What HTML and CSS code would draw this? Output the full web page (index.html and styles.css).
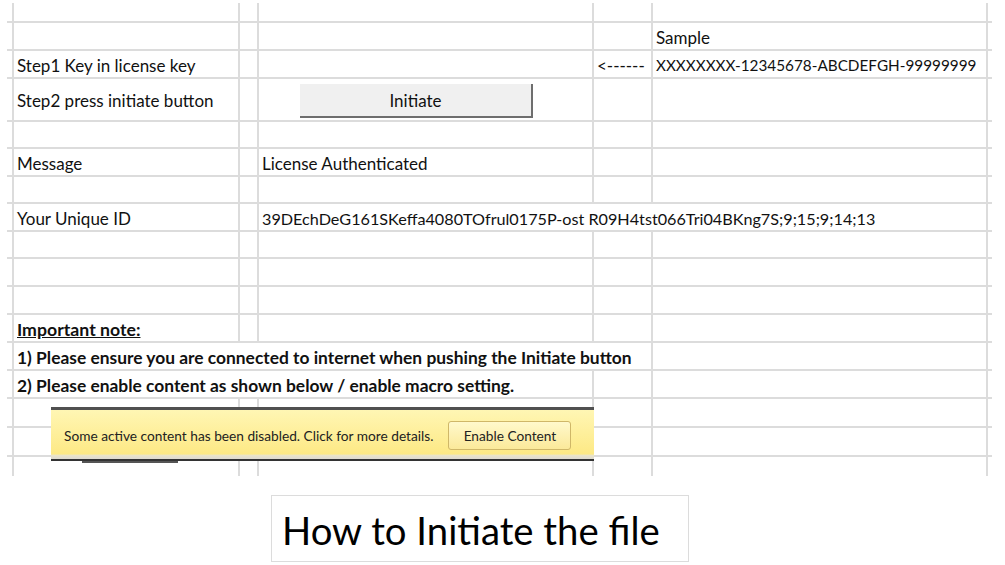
FILE: index.html
```html
<!DOCTYPE html>
<html lang="en">
<head>
    <meta charset="UTF-8">
    <meta name="viewport" content="width=device-width, initial-scale=1.0">
    <title>How to Initiate the file</title>
    <link rel="stylesheet" href="styles.css">
</head>
<body>
    <div class="sheet">
        <div class="row h20"><div class="c"></div><div class="c"></div><div class="c"></div><div class="c"></div><div class="c"></div><div class="c"></div><div class="c end"></div></div>
        <div class="row"><div class="c"></div><div class="c"></div><div class="c"></div><div class="c"></div><div class="c"></div><div class="c">Sample</div><div class="c end"></div></div>
        <div class="row"><div class="c"></div><div class="c">Step1 Key in license key</div><div class="c"></div><div class="c"></div><div class="c">&lt;------</div><div class="c key">XXXXXXXX-12345678-ABCDEFGH-99999999</div><div class="c end"></div></div>
        <div class="row h43">
            <div class="c"></div><div class="c">Step2 press initiate button</div><div class="c"></div>
            <div class="c"><button class="initiate">Initiate</button></div>
            <div class="c"></div><div class="c"></div><div class="c end"></div>
        </div>
        <div class="row h27"><div class="c"></div><div class="c"></div><div class="c"></div><div class="c"></div><div class="c"></div><div class="c"></div><div class="c end"></div></div>
        <div class="row"><div class="c"></div><div class="c">Message</div><div class="c"></div><div class="c">License Authenticated</div><div class="c"></div><div class="c"></div><div class="c end"></div></div>
        <div class="row h27"><div class="c"></div><div class="c"></div><div class="c"></div><div class="c"></div><div class="c"></div><div class="c"></div><div class="c end"></div></div>
        <div class="row"><div class="c"></div><div class="c">Your Unique ID</div><div class="c"></div><div class="c span3 uid">39DEchDeG161SKeffa4080TOfrul0175P-ost R09H4tst066Tri04BKng7S;9;15;9;14;13</div><div class="c end"></div></div>
        <div class="row h27"><div class="c"></div><div class="c"></div><div class="c"></div><div class="c"></div><div class="c"></div><div class="c"></div><div class="c end"></div></div>
        <div class="row"><div class="c"></div><div class="c"></div><div class="c"></div><div class="c"></div><div class="c"></div><div class="c"></div><div class="c end"></div></div>
        <div class="row"><div class="c"></div><div class="c"></div><div class="c"></div><div class="c"></div><div class="c"></div><div class="c"></div><div class="c end"></div></div>
        <div class="row"><div class="c"></div><div class="c note">Important note:</div><div class="c"></div><div class="c"></div><div class="c"></div><div class="c"></div><div class="c end"></div></div>
        <div class="row"><div class="c"></div><div class="c span4 bold">1) Please ensure you are connected to internet when pushing the Initiate button</div><div class="c"></div><div class="c end"></div></div>
        <div class="row"><div class="c"></div><div class="c span3 bold">2) Please enable content as shown below / enable macro setting.</div><div class="c"></div><div class="c"></div><div class="c end"></div></div>
        <div class="row h29"><div class="c"></div><div class="c"></div><div class="c"></div><div class="c"></div><div class="c"></div><div class="c"></div><div class="c end"></div></div>
        <div class="row h29"><div class="c"></div><div class="c"></div><div class="c"></div><div class="c"></div><div class="c"></div><div class="c"></div><div class="c end"></div></div>
        <div class="row h19 last"><div class="c"></div><div class="c"></div><div class="c"></div><div class="c"></div><div class="c"></div><div class="c"></div><div class="c end"></div></div>

        <div class="msgbar">
            <span class="msgbar-text">Some active content has been disabled. Click for more details.</span>
            <span class="msgbar-btn">Enable Content</span>
        </div>
    </div>

    <div class="caption">How to Initiate the file</div>
</body>
</html>
```

FILE: styles.css
```css
body {
    margin: 0;
    background: #fff;
    color: #111;
    font-family: Lato, "Noto Sans", sans-serif;
}
.sheet {
    position: relative;
    margin: 3px 0 0 7px;
    width: 985px;
    font-size: 17px;
}
.row {
    display: grid;
    grid-template-columns: 7px 226px 19px 335px 59px 335px 4px;
    height: 28px;
}
.h19 { height: 19px; }
.h20 { height: 20px; }
.h27 { height: 27px; }
.h29 { height: 29px; }
.h43 { height: 43px; }
.c {
    box-sizing: border-box;
    border-right: 2px solid #dcdcdc;
    border-bottom: 2px solid #dcdcdc;
    padding: 2px 0 0 3px;
    display: flex;
    align-items: center;
    white-space: nowrap;
}
.c.end {
    border-right: none;
}
.last .c {
    border-bottom: none;
}
.span3 { grid-column: span 3; }
.span4 { grid-column: span 4; }
.key {
    font-size: 15.3px;
}
.uid {
    font-size: 16.2px;
}
.bold {
    font-weight: bold;
    font-size: 17.4px;
}
.note {
    font-weight: bold;
    font-size: 17.7px;
    text-decoration: underline;
}
.initiate {
    margin: 1px 0 0 38px;
    width: 233px;
    height: 34px;
    background: #f0f0f0;
    border: none;
    border-right: 2px solid #6e6e6e;
    border-bottom: 2px solid #6e6e6e;
    font-family: inherit;
    font-size: 17px;
    color: #111;
    padding: 0;
}
.msgbar {
    position: absolute;
    left: 44px;
    top: 404px;
    width: 543px;
    height: 54px;
    box-sizing: border-box;
    border-top: 3px solid #505050;
    border-bottom: 2px solid #333;
    background: linear-gradient(to bottom, #fff6b4 0%, #fde985 90%, #ebe5c8 92%, #dedad0 100%);
    display: flex;
    align-items: center;
    padding: 1px 0 0 13px;
    font-size: 13.7px;
    color: #222;
    white-space: nowrap;
}
.msgbar::after {
    content: "";
    position: absolute;
    left: 31px;
    bottom: -4px;
    width: 96px;
    height: 2px;
    background: #555;
}
.msgbar-btn {
    margin-left: 15px;
    width: 123px;
    height: 29px;
    box-sizing: border-box;
    border: 1px solid #cfb768;
    border-radius: 3px;
    background: linear-gradient(to bottom, #fff9cc, #fbe99a);
    display: flex;
    align-items: center;
    justify-content: center;
}
.caption {
    margin: 19px 0 0 271px;
    width: 418px;
    height: 67px;
    box-sizing: border-box;
    border: 1px solid #dcdcdc;
    padding: 12px 0 0 10px;
    font-size: 38.3px;
    line-height: 1.2;
    color: #000;
    white-space: nowrap;
}
```
